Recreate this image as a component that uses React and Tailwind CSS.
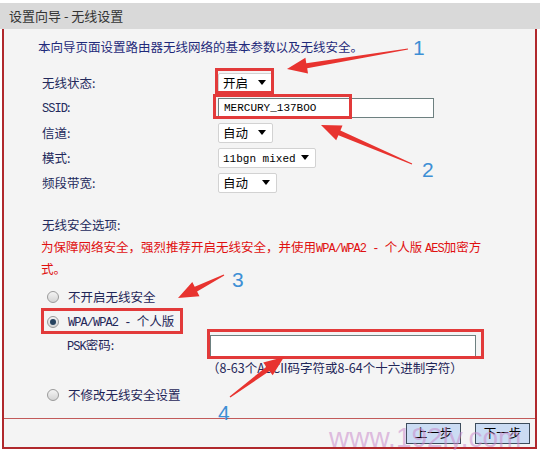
import React from 'react';

// 箭头：由细到粗的红色标注箭头
const Arrow = ({ from, to }) => {
  const dx = to[0] - from[0];
  const dy = to[1] - from[1];
  const len = Math.hypot(dx, dy);
  const ux = dx / len;
  const uy = dy / len;
  const nx = -uy;
  const ny = ux;
  const head = 20;
  const bx = to[0] - ux * head;
  const by = to[1] - uy * head;
  const p = (x, y) => `${x.toFixed(1)},${y.toFixed(1)}`;
  const pts = [
    p(from[0] + nx * 0.6, from[1] + ny * 0.6),
    p(bx + nx * 2.6, by + ny * 2.6),
    p(bx + nx * 8, by + ny * 8),
    p(to[0], to[1]),
    p(bx - nx * 8, by - ny * 8),
    p(bx - nx * 2.6, by - ny * 2.6),
    p(from[0] - nx * 0.6, from[1] - ny * 0.6),
  ].join(' ');
  return <polygon points={pts} fill="#e8332f" />;
};

// 宋体风格的半角西文
const L = ({ children }) => (
  <span className="text-[12px] tracking-[-0.95px]" style={{ fontFamily: '"Liberation Mono", monospace' }}>
    {children}
  </span>
);

const Caret = () => (
  <span className="h-0 w-0 border-x-[4px] border-t-[5px] border-x-transparent border-t-black" />
);

const Select = ({ children, width }) => (
  <div
    className={`flex h-[20px] items-center justify-between rounded-[2px] border border-[#d2d2d2] bg-white pl-[4px] pr-[6px] text-black ${width}`}
  >
    <span>{children}</span>
    <Caret />
  </div>
);

const Radio = ({ checked }) => (
  <span className="flex h-[12px] w-[12px] items-center justify-center rounded-full border border-[#9a9a9a] bg-gradient-to-b from-[#f4f4f4] to-[#d4d4d4]">
    {checked && <span className="h-[6px] w-[6px] rounded-full bg-[#27435f]" />}
  </span>
);

const Row = ({ label, children }) => (
  <div className="flex h-[25px] items-center pl-[4px]">
    <span className="w-[176px] text-[#232a5c]">{label}</span>
    {children}
  </div>
);

const App = () => {
  return (
    <div
      className="relative h-[450px] w-[540px] overflow-hidden bg-white text-[12.5px] leading-[18px] text-[#1f2658]"
      style={{ fontFamily: '"Noto Sans CJK SC", "Liberation Sans", sans-serif' }}
    >
      {/* 标题栏 */}
      <div className="mt-[3px] flex h-[26px] items-center bg-[#d9d9d9] pl-[9px] text-[13px] text-[#333333]">
        设置向导 - 无线设置
      </div>

      {/* 主体 */}
      <div className="mx-[2px] flex h-[420px] w-[535px] flex-col border-x-2 border-b-2 border-[#b0282c] bg-[#f4f4f4]">
        <div className="pl-[34px] pt-[9px]">
          <p className="text-[#1f2a7a]">本向导页面设置路由器无线网络的基本参数以及无线安全。</p>

          <div className="mt-[14px]">
            <Row label="无线状态:">
              <Select width="w-[55px]">开启</Select>
            </Row>
            <Row label={<><L>SSID</L>:</>}>
              <div className="flex h-[20px] w-[216px] items-center border border-[#6d8080] bg-white pl-[5px] text-[11px] text-black" style={{ fontFamily: '"Liberation Mono", monospace' }}>
                MERCURY_137BOO
              </div>
            </Row>
            <Row label="信道:">
              <Select width="w-[55px]">自动</Select>
            </Row>
            <Row label="模式:">
              <Select width="w-[98px]">
                <span className="text-[11px]" style={{ fontFamily: '"Liberation Mono", monospace' }}>11bgn mixed</span>
              </Select>
            </Row>
            <Row label="频段带宽:">
              <Select width="w-[59px]">自动</Select>
            </Row>
          </div>

          <p className="mt-[21px] pl-[4px] text-[#232a5c]">无线安全选项:</p>
          <p className="mt-[3px] pl-[3px] leading-[19px] text-[#e01010]">
            为保障网络安全，强烈推荐开启无线安全，并使用<L>WPA/WPA2 - </L>个人版 <L>AES</L>加密方
            <br />
            式。
          </p>

          <div className="mt-[7px] flex h-[24px] items-center gap-[9px] pl-[9px]">
            <Radio />
            <span>不开启无线安全</span>
          </div>
          <div className="flex h-[26px] items-center gap-[9px] pl-[9px]">
            <Radio checked />
            <span><L>WPA/WPA2 - </L>个人版</span>
          </div>
          <div className="flex h-[22px] items-center pl-[29px]">
            <span className="w-[143px]"><L>PSK</L>密码:</span>
            <div className="h-[22px] w-[266px] border border-[#6d8080] bg-white" />
          </div>
          <p className="mt-[2px] pl-[169px]">（8-63个ASCII码字符或8-64个十六进制字符）</p>
          <div className="mt-[6px] flex h-[24px] items-center gap-[9px] pl-[9px]">
            <Radio />
            <span>不修改无线安全设置</span>
          </div>
        </div>

        {/* 底部按钮 */}
        <div className="mt-auto border-t border-[#c25a5a]">
          <div className="flex h-[28px] items-center justify-end gap-[14px] pr-[5px]">
            <button className="h-[21px] w-[55px] border border-[#3d4d5c] bg-[#cbdcf3] text-[12.5px] leading-none text-black">
              上一步
            </button>
            <button className="h-[21px] w-[55px] border border-[#3d4d5c] bg-[#cbdcf3] text-[12.5px] leading-none text-black">
              下一步
            </button>
          </div>
        </div>
      </div>

      {/* 标注层 */}
      <div className="pointer-events-none absolute inset-0">
        <div className="absolute left-[215px] top-[68px] h-[26px] w-[59px] border-[3px] border-[#e23a3a]" />
        <div className="absolute left-[213px] top-[94px] h-[25px] w-[139px] border-[3px] border-[#e23a3a]" />
        <div className="absolute left-[41px] top-[308px] h-[26px] w-[142px] border-[3px] border-[#e23a3a]" />
        <div className="absolute left-[207px] top-[329px] h-[30px] w-[277px] border-[3px] border-[#e23a3a]" />

        <svg className="absolute inset-0" width="540" height="450" viewBox="0 0 540 450">
          <Arrow from={[408, 49]} to={[287, 69]} />
          <Arrow from={[412, 164]} to={[321, 125]} />
          <Arrow from={[224, 275]} to={[178, 298]} />
          <Arrow from={[230, 397]} to={[284, 357]} />
        </svg>

        <span className="absolute left-[413px] top-[37px] text-[21px] leading-[21px] text-[#3d8fd5]" style={{ fontFamily: '"Liberation Sans", sans-serif' }}>1</span>
        <span className="absolute left-[422px] top-[159px] text-[21px] leading-[21px] text-[#3d8fd5]" style={{ fontFamily: '"Liberation Sans", sans-serif' }}>2</span>
        <span className="absolute left-[232px] top-[269px] text-[21px] leading-[21px] text-[#3d8fd5]" style={{ fontFamily: '"Liberation Sans", sans-serif' }}>3</span>
        <span className="absolute left-[218px] top-[402px] text-[21px] leading-[21px] text-[#3d8fd5]" style={{ fontFamily: '"Liberation Sans", sans-serif' }}>4</span>

        <span className="absolute left-[329px] top-[424px] text-[28px] leading-[28px] text-[#c98acb]/55" style={{ fontFamily: '"Liberation Sans", sans-serif' }}>
          www.192ly.com
        </span>
      </div>
    </div>
  );
};

export default App;
